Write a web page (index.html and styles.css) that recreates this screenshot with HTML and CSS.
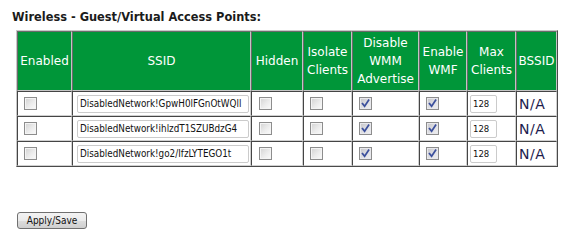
FILE: index.html
```html
<!DOCTYPE html>
<html>
<head>
<meta charset="utf-8">
<link rel="stylesheet" href="styles.css">
</head>
<body>
<div class="title">Wireless - Guest/Virtual Access Points:</div>
<table class="grid">
  <thead>
    <tr class="head-row">
      <th class="c-en">Enabled</th>
      <th class="c-ssid">SSID</th>
      <th class="c-hid">Hidden</th>
      <th class="c-iso">Isolate<br>Clients</th>
      <th class="c-wmm">Disable<br>WMM<br>Advertise</th>
      <th class="c-wmf">Enable<br>WMF</th>
      <th class="c-max">Max<br>Clients</th>
      <th class="c-bss">BSSID</th>
    </tr>
  </thead>
  <tbody>
    <tr>
      <td><span class="cb"></span></td>
      <td><input class="ssid" type="text" value="DisabledNetwork!GpwH0lFGnOtWQll"></td>
      <td><span class="cb cb-hid"></span></td>
      <td><span class="cb"></span></td>
      <td><span class="cb on"><svg viewBox="0 0 11 11" width="11" height="11"><path d="M2.5 5.6 L4.6 8.2 L8.6 2.2" /></svg></span></td>
      <td><span class="cb on"><svg viewBox="0 0 11 11" width="11" height="11"><path d="M2.5 5.6 L4.6 8.2 L8.6 2.2" /></svg></span></td>
      <td><input class="maxc" type="text" value="128"></td>
      <td class="na">N/A</td>
    </tr>
    <tr>
      <td><span class="cb"></span></td>
      <td><input class="ssid" type="text" value="DisabledNetwork!ihlzdT1SZUBdzG4"></td>
      <td><span class="cb cb-hid"></span></td>
      <td><span class="cb"></span></td>
      <td><span class="cb on"><svg viewBox="0 0 11 11" width="11" height="11"><path d="M2.5 5.6 L4.6 8.2 L8.6 2.2" /></svg></span></td>
      <td><span class="cb on"><svg viewBox="0 0 11 11" width="11" height="11"><path d="M2.5 5.6 L4.6 8.2 L8.6 2.2" /></svg></span></td>
      <td><input class="maxc" type="text" value="128"></td>
      <td class="na">N/A</td>
    </tr>
    <tr>
      <td><span class="cb"></span></td>
      <td><input class="ssid" type="text" value="DisabledNetwork!go2/IfzLYTEGO1t"></td>
      <td><span class="cb cb-hid"></span></td>
      <td><span class="cb"></span></td>
      <td><span class="cb on"><svg viewBox="0 0 11 11" width="11" height="11"><path d="M2.5 5.6 L4.6 8.2 L8.6 2.2" /></svg></span></td>
      <td><span class="cb on"><svg viewBox="0 0 11 11" width="11" height="11"><path d="M2.5 5.6 L4.6 8.2 L8.6 2.2" /></svg></span></td>
      <td><input class="maxc" type="text" value="128"></td>
      <td class="na">N/A</td>
    </tr>
  </tbody>
</table>
<div class="actions"><button class="btn" type="button">Apply/Save</button></div>
</body>
</html>
```

FILE: styles.css
```css
html, body {
  margin: 0;
  background: #ffffff;
}
body {
  padding: 10px 0 0 12px;
  font-family: "DejaVu Sans", sans-serif;
  color: #1a1a1a;
}
.title {
  font-family: "DejaVu Sans", sans-serif;
  font-weight: bold;
  font-size: 11.4px;
  line-height: 14px;
  color: #1b1b1b;
  margin: 0 0 6px 0;
}
.grid {
  margin-left: 4px;
  border-collapse: separate;
  border-spacing: 0;
  table-layout: fixed;
  width: 542px;
  border: 1px solid;
  border-color: #c8c8c8 #4a4a4a #4a4a4a #c8c8c8;
}
.grid th {
  box-sizing: border-box;
  background: #009639;
  color: #ffffff;
  font-weight: normal;
  font-size: 12px;
  line-height: 18px;
  padding: 0;
  text-align: center;
  vertical-align: middle;
  border: 1px solid;
  border-color: #6a6a6a #c4c4c4 #c4c4c4 #6a6a6a;
}
.head-row { height: 60px; }
.c-en { width: 55px; }
.c-ssid { width: 179px; }
.c-hid { width: 52px; }
.c-iso { width: 49px; }
.c-wmm { width: 67px; }
.c-wmf { width: 48px; }
.c-max { width: 49px; }
.c-bss { width: 41px; }
.grid tbody tr { height: 25px; }
.grid td {
  box-sizing: border-box;
  padding: 0;
  vertical-align: middle;
  text-align: left;
  border: 1px solid;
  border-color: #454545 #d0d0d0 #d0d0d0 #454545;
  background: #ffffff;
}
.cb {
  display: block;
  box-sizing: border-box;
  width: 13px;
  height: 13px;
  margin-left: 6px;
  border: 1px solid #8d8d8d;
  background: linear-gradient(135deg, #d2d2d2 0%, #ececec 55%, #fbfbfb 100%);
  box-shadow: inset 0 0 0 1px #f4f4f4;
}
.cb-hid { margin-left: 7px; }
.cb.on {
  background: linear-gradient(135deg, #c4c4c8 0%, #e0e0e4 55%, #f0f0f2 100%);
  box-shadow: inset 0 0 0 1px #e8e8ec;
}
.cb svg {
  display: block;
  fill: none;
  stroke: #3b4f9c;
  stroke-width: 1.7;
  stroke-linecap: square;
}
.ssid, .maxc {
  display: block;
  box-sizing: border-box;
  height: 18px;
  border: 1px solid #cbcbcb;
  border-radius: 2px;
  background: #ffffff;
  color: #111111;
  font-family: "DejaVu Sans Condensed", "DejaVu Sans", sans-serif;
  outline: none;
}
.ssid {
  width: 172px;
  margin-left: 4px;
  padding: 0 0 0 2px;
  font-size: 9.8px;
}
.maxc {
  width: 27px;
  margin-left: 2px;
  padding: 0 0 0 2px;
  font-size: 9.5px;
}
.na {
  font-family: "DejaVu Sans", sans-serif;
  font-size: 14px;
  color: #1c1c4e;
  padding-left: 2px !important;
  letter-spacing: 0.5px;
}
.actions {
  margin: 45px 0 0 5px;
}
.btn {
  display: block;
  box-sizing: border-box;
  width: 70px;
  height: 17px;
  padding: 0;
  border: 1px solid #707070;
  border-radius: 3px;
  background: linear-gradient(#f3f3f3 0%, #ebebeb 50%, #dddddd 51%, #cfcfcf 100%);
  font-family: "DejaVu Sans Condensed", "DejaVu Sans", sans-serif;
  font-size: 10px;
  color: #111111;
  line-height: 15px;
}
```
